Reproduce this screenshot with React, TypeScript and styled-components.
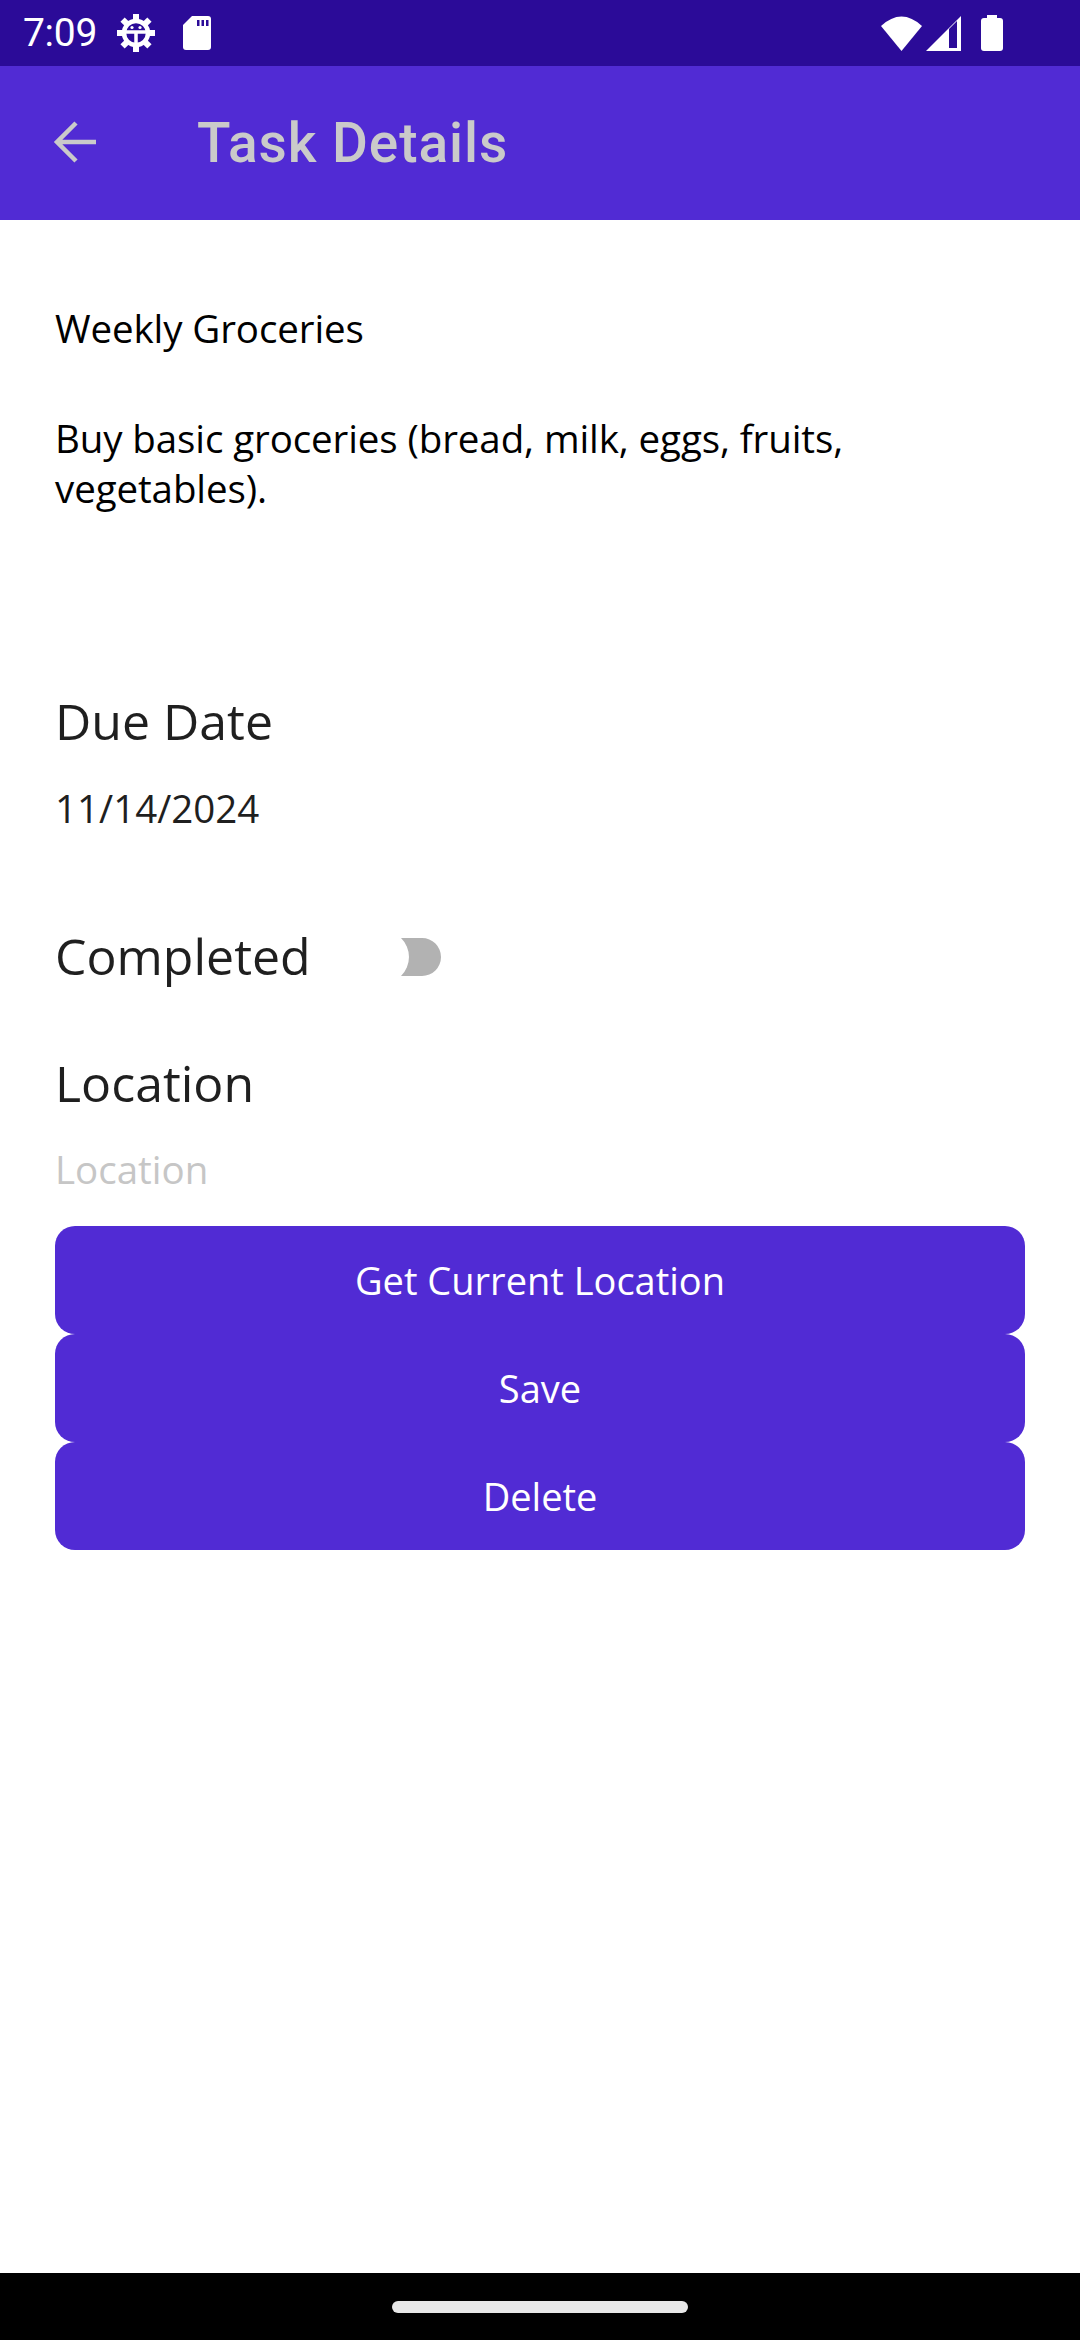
import styled, { createGlobalStyle } from 'styled-components';

const GlobalStyle = createGlobalStyle`
  html, body {
    margin: 0;
    padding: 0;
    background: #ffffff;
  }
  * {
    box-sizing: border-box;
  }
`;

const Screen = styled.div`
  width: 1080px;
  height: 2340px;
  display: flex;
  flex-direction: column;
  background: #ffffff;
  overflow: hidden;
`;

const StatusBar = styled.div`
  height: 66px;
  flex-shrink: 0;
  background: #2b0b98;
  display: flex;
  align-items: center;
  justify-content: space-between;
  padding: 0 77px 0 23px;
  color: #ffffff;
  font-family: Roboto, "Liberation Sans", sans-serif;
`;

const StatusGroup = styled.div`
  display: flex;
  align-items: center;
`;

// each status icon sits at its own distance from the previous one
const StatusSlot = styled.span<{ $ml: number }>`
  display: flex;
  margin-left: ${(p) => p.$ml}px;
`;

const Clock = styled.span`
  font-size: 39px;
  line-height: 66px;
  letter-spacing: -0.3px;
`;

const AppBar = styled.header`
  height: 154px;
  flex-shrink: 0;
  background: #512bd4;
  display: flex;
  align-items: center;
  padding-left: 53px;
`;

const BackButton = styled.button`
  width: 44px;
  height: 44px;
  padding: 0;
  border: none;
  background: none;
  display: flex;
  margin-right: 100px;
  margin-top: -2px;
`;

const Title = styled.h1`
  margin: 0;
  font-family: Roboto, "Liberation Sans", sans-serif;
  font-weight: 500;
  font-size: 55px;
  color: #cacaca;
  letter-spacing: 0.95px;
`;

const Content = styled.main`
  flex: 1;
  display: flex;
  flex-direction: column;
  padding: 83px 55px 0 55px;
  font-family: "Open Sans", "Noto Sans", sans-serif;
`;

const TaskText = styled.p<{ $top?: number }>`
  margin: ${(p) => p.$top ?? 0}px 0 0 0;
  font-size: 38.5px;
  line-height: 50px;
  color: #000000;
  letter-spacing: -0.1px;
  padding-right: 100px;
`;

const FieldLabel = styled.h2<{ $top: number }>`
  margin: ${(p) => p.$top}px 0 0 0;
  font-size: 50px;
  font-weight: 400;
  line-height: 65px;
  color: #1f1f1f;
`;

const FieldValue = styled.div<{ $top: number; $muted?: boolean }>`
  margin-top: ${(p) => p.$top}px;
  font-size: 38.5px;
  line-height: 50px;
  color: ${(p) => (p.$muted ? '#c6c6c6' : '#1f1f1f')};
`;

const SwitchRow = styled.div`
  margin-top: 91px;
  height: 65px;
  display: flex;
  align-items: center;
`;

const Toggle = styled.div`
  margin-left: 90px;
  width: 40px;
  height: 38px;
  display: flex;
`;

const ButtonStack = styled.div`
  margin-top: 32px;
  display: flex;
  flex-direction: column;
`;

const ActionButton = styled.button`
  height: 108px;
  width: 100%;
  border: none;
  border-radius: 20px;
  background: #512bd4;
  color: #ffffff;
  font-family: "Open Sans", "Noto Sans", sans-serif;
  font-size: 38px;
  padding: 0;
`;

const NavBar = styled.div`
  height: 67px;
  flex-shrink: 0;
  background: #000000;
  display: flex;
  justify-content: center;
  padding-top: 28px;
`;

const Handle = styled.div`
  width: 296px;
  height: 12px;
  border-radius: 6px;
  background: #e8e8e8;
`;

const DebugIcon = () => (
  <svg width="38" height="38" viewBox="0 0 38 38" fill="none">
    <g fill="#ffffff">
      {Array.from({ length: 8 }).map((_, i) => (
        <rect key={i} x="16" y="0" width="6" height="8" transform={`rotate(${i * 45} 19 19)`} />
      ))}
    </g>
    <circle cx="19" cy="19" r="12" stroke="#ffffff" strokeWidth="4.5" />
    <path d="M8 18 H30 M19 18 V31" stroke="#ffffff" strokeWidth="3.5" />
    <circle cx="15" cy="13.5" r="1.6" fill="#ffffff" />
    <circle cx="23" cy="13.5" r="1.6" fill="#ffffff" />
  </svg>
);

const SdCardIcon = () => (
  <svg width="28" height="34" viewBox="0 0 28 34">
    <path d="M9 0 H25 Q28 0 28 3 V31 Q28 34 25 34 H3 Q0 34 0 31 V9 Z" fill="#ffffff" />
    <rect x="14" y="4" width="2.5" height="6" fill="#2b0b98" />
    <rect x="18.5" y="4" width="2.5" height="6" fill="#2b0b98" />
    <rect x="23" y="4" width="2.5" height="6" fill="#2b0b98" />
  </svg>
);

const WifiIcon = () => (
  <svg width="41" height="35" viewBox="0 0 41 35">
    <path d="M0 10 Q20.5 -9 41 10 L20.5 35 Z" fill="#ffffff" />
  </svg>
);

const SignalIcon = () => (
  <svg width="35" height="35" viewBox="0 0 35 35">
    <path d="M0 35 L35 0 V35 Z" fill="#ffffff" />
    <path d="M23 13 V32 H31 V5 Z" fill="#2b0b98" />
  </svg>
);

const BatteryIcon = () => (
  <svg width="22" height="36" viewBox="0 0 22 36">
    <rect x="6" y="0" width="10" height="4" fill="#ffffff" />
    <rect x="0" y="3" width="22" height="33" rx="3" fill="#ffffff" />
  </svg>
);

const BackArrow = () => (
  <svg width="44" height="44" viewBox="0 0 44 44">
    <path d="M43 22 H4 M23 3 L4 22 L23 41" stroke="#cacaca" strokeWidth="4.5" fill="none" />
  </svg>
);

const SwitchThumb = () => (
  <svg width="40" height="38" viewBox="0 0 40 38">
    <path d="M0 0 H21 A19 19 0 0 1 21 38 H0 A26.6 26.6 0 0 0 0 0 Z" fill="#b2b2b2" />
  </svg>
);

export default function App() {
  return (
    <Screen>
      <GlobalStyle />
      <StatusBar>
        <StatusGroup>
          <Clock>7:09</Clock>
          <StatusSlot $ml={20}>
            <DebugIcon />
          </StatusSlot>
          <StatusSlot $ml={28}>
            <SdCardIcon />
          </StatusSlot>
        </StatusGroup>
        <StatusGroup>
          <WifiIcon />
          <StatusSlot $ml={4}>
            <SignalIcon />
          </StatusSlot>
          <StatusSlot $ml={20}>
            <BatteryIcon />
          </StatusSlot>
        </StatusGroup>
      </StatusBar>

      <AppBar>
        <BackButton aria-label="Back">
          <BackArrow />
        </BackButton>
        <Title>Task Details</Title>
      </AppBar>

      <Content>
        <TaskText>Weekly Groceries</TaskText>
        <TaskText $top={60}>Buy basic groceries (bread, milk, eggs, fruits, vegetables).</TaskText>

        <FieldLabel $top={176}>Due Date</FieldLabel>
        <FieldValue $top={29}>11/14/2024</FieldValue>

        <SwitchRow>
          <FieldLabel $top={0}>Completed</FieldLabel>
          <Toggle>
            <SwitchThumb />
          </Toggle>
        </SwitchRow>

        <FieldLabel $top={62}>Location</FieldLabel>
        <FieldValue $top={28} $muted>Location</FieldValue>

        <ButtonStack>
          <ActionButton>Get Current Location</ActionButton>
          <ActionButton>Save</ActionButton>
          <ActionButton>Delete</ActionButton>
        </ButtonStack>
      </Content>

      <NavBar>
        <Handle />
      </NavBar>
    </Screen>
  );
}
